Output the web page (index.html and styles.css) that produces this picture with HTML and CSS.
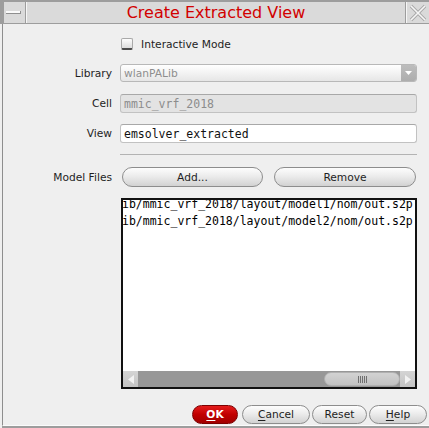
FILE: index.html
```html
<!DOCTYPE html>
<html>
<head>
<meta charset="utf-8">
<link rel="stylesheet" href="styles.css">
</head>
<body>
<div class="window">
  <div class="titlebar">
    <div class="tb-btn tb-min"><span class="dash"></span></div>
    <div class="title">Create Extracted View</div>
    <div class="tb-btn tb-close">
      <svg width="18" height="18" viewBox="0 0 18 18">
        <path d="M2 2 L16 16 M16 2 L2 16" stroke="#a8a8a8" stroke-width="3.4" fill="none"/>
        <path d="M2 2 L16 16 M16 2 L2 16" stroke="#f6f6f6" stroke-width="1.6" fill="none"/>
      </svg>
    </div>
  </div>
  <div class="content">
    <div class="row row-check">
      <div class="label"></div>
      <div class="field check-field"><span class="checkbox"></span><span class="check-text">Interactive Mode</span></div>
    </div>
    <div class="row row-lib">
      <div class="label">Library</div>
      <div class="field combo"><span class="combo-text">wlanPALib</span><span class="combo-arrow"><svg width="7" height="4" viewBox="0 0 7 4"><path d="M0 0 H7 L3.5 4 Z" fill="#fff"/></svg></span></div>
    </div>
    <div class="row row-cell">
      <div class="label">Cell</div>
      <div class="field entry disabled">mmic_vrf_2018</div>
    </div>
    <div class="row row-view">
      <div class="label">View</div>
      <div class="field entry">emsolver_extracted</div>
    </div>
    <div class="row row-sep">
      <div class="label"></div>
      <div class="field sep"></div>
    </div>
    <div class="row row-model">
      <div class="label">Model Files</div>
      <div class="field btn-pair">
        <button class="btn btn-add">Add...</button>
        <button class="btn btn-remove">Remove</button>
      </div>
    </div>
    <div class="row row-list">
      <div class="label"></div>
      <div class="field listbox">
        <div class="list-lines">
          <div>ib/mmic_vrf_2018/layout/model1/nom/out.s2p</div>
          <div>ib/mmic_vrf_2018/layout/model2/nom/out.s2p</div>
        </div>
        <div class="hscroll">
          <span class="sb-arrow"><svg width="8" height="9" viewBox="0 0 8 9"><path d="M7 0 V9 L1 4.5 Z" fill="#f2f2f2"/></svg></span>
          <span class="sb-track"><span class="sb-thumb"><span class="grip"></span></span></span>
          <span class="sb-arrow"><svg width="8" height="9" viewBox="0 0 8 9"><path d="M1 0 V9 L7 4.5 Z" fill="#f2f2f2"/></svg></span>
        </div>
      </div>
    </div>
    <div class="actions">
      <button class="btn btn-ok"><u>O</u>K</button>
      <button class="btn btn-cancel"><u>C</u>ancel</button>
      <button class="btn btn-reset">Reset</button>
      <button class="btn btn-help"><u>H</u>elp</button>
    </div>
  </div>
</div>
</body>
</html>
```

FILE: styles.css
```css
html, body {
  margin: 0;
  padding: 0;
  background: #efefef;
}
body {
  font-family: "DejaVu Sans", sans-serif;
  font-size: 10.67px;
  color: #1e1e1e;
}
.window {
  width: 429px;
  height: 428px;
  display: flex;
  flex-direction: column;
  background: #efefef;
  overflow: hidden;
}
.titlebar {
  height: 24px;
  box-sizing: border-box;
  padding: 2px 0 1px 4px;
  background: #9d9d9d;
  display: flex;
  gap: 1px;
}
.tb-btn {
  background: #dadada;
  display: flex;
  align-items: center;
  justify-content: center;
}
.tb-min {
  width: 21px;
}
.dash {
  width: 14px;
  height: 2px;
  background: #fafafa;
  border-right: 1px solid #8f8f8f;
  border-bottom: 1px solid #8f8f8f;
  margin-right: 2px;
}
.title {
  width: 378px;
  border-left: 1px solid #f6f6f6;
  background: #dadada;
  color: #d20000;
  font-size: 16px;
  line-height: 21px;
  text-align: center;
}
.tb-close {
  flex: 1;
  border-left: 1px solid #f6f6f6;
  justify-content: flex-start;
  padding-left: 2px;
}
.content {
  flex: 1;
  margin-left: 2px;
  border-left: 1px solid #8e8e8e;
  border-bottom: 1px solid #fbfbfb;
  box-shadow: 0 2px 0 #9d9d9d;
  margin-bottom: 2px;
  display: flex;
  flex-direction: column;
}
.row {
  display: flex;
  column-gap: 8px;
}
.label {
  width: 109px;
  flex: none;
  text-align: right;
  display: flex;
  align-items: center;
  justify-content: flex-end;
}
.field {
  width: 297px;
  flex: none;
  box-sizing: border-box;
}
.row-check { margin-top: 14px; height: 12px; }
.check-field {
  display: flex;
  align-items: center;
  padding-left: 1px;
}
.checkbox {
  width: 12px;
  height: 12px;
  box-sizing: border-box;
  border: 1px solid #a9a9a9;
  border-bottom: 2px solid #4a4a4a;
  border-radius: 2px;
  background: linear-gradient(#fdfdfd, #dcdcdc);
}
.check-text {
  margin-left: 8px;
}
.row-lib { margin-top: 14px; height: 18px; }
.combo {
  border: 1px solid #b8b8b8;
  border-radius: 3px;
  background: linear-gradient(#ffffff, #e6e6e6);
  display: flex;
  align-items: center;
  overflow: hidden;
}
.combo-text {
  flex: 1;
  padding-left: 3px;
  color: #8e8e8e;
}
.combo-arrow {
  width: 15px;
  align-self: stretch;
  background: linear-gradient(#bdbdbd, #adadad);
  display: flex;
  align-items: center;
  justify-content: center;
}
.row-cell { margin-top: 12px; height: 19px; }
.row-view { margin-top: 11px; height: 19px; }
.entry {
  border: 1px solid #c2c2c2;
  border-top-color: #a8a8a8;
  border-radius: 3px;
  background: #ffffff;
  font-family: "DejaVu Sans Mono", monospace;
  font-size: 11.5px;
  line-height: 18px;
  padding-left: 3px;
  color: #111;
}
.entry.disabled {
  background: #e3e3e3;
  color: #8c8c8c;
}
.row-sep { margin-top: 11px; height: 1px; }
.sep {
  background: #b3b3b3;
}
.row-model { margin-top: 12px; height: 20px; }
.btn-pair {
  display: flex;
  gap: 11px;
  padding-left: 2px;
}
.btn {
  font-family: "DejaVu Sans", sans-serif;
  font-size: 10.67px;
  color: #1e1e1e;
  border: 1px solid #8d8d8d;
  border-radius: 10px;
  background: linear-gradient(#fdfdfd 0%, #ececec 45%, #d2d2d2 100%);
  padding: 0;
  margin: 0;
  box-sizing: border-box;
}
.btn u {
  text-decoration-thickness: 1px;
  text-underline-offset: 2px;
}
.btn-add { width: 141px; }
.btn-remove { width: 142px; }
.row-list { margin-top: 11px; height: 191px; }
.listbox {
  margin-left: 1px;
  width: 296px;
  border: 2px solid #111;
  background: #ffffff;
  display: flex;
  flex-direction: column;
  overflow: hidden;
}
.list-lines {
  flex: 1;
  margin-top: -4px;
  margin-left: -1px;
  font-family: "DejaVu Sans Mono", monospace;
  font-size: 11.5px;
  line-height: 17px;
  color: #000;
  white-space: nowrap;
  overflow: hidden;
}
.hscroll {
  height: 16px;
  display: flex;
  background: #979797;
}
.sb-arrow {
  width: 15px;
  background: linear-gradient(#d4d4d4, #c4c4c4);
  display: flex;
  align-items: center;
  justify-content: center;
}
.sb-track {
  flex: 1;
  display: flex;
  justify-content: flex-end;
  align-items: stretch;
  padding: 1px 0;
}
.sb-thumb {
  width: 76px;
  box-sizing: border-box;
  border: 1px solid #b0b0b0;
  border-radius: 8px;
  background: linear-gradient(#d2d2d2, #c2c2c2);
  display: flex;
  align-items: center;
  justify-content: center;
}
.grip {
  width: 9px;
  height: 7px;
  background: repeating-linear-gradient(90deg, #6f6f6f 0 1px, transparent 1px 2px);
}
.actions {
  margin-top: 16px;
  height: 19px;
  display: flex;
  justify-content: flex-end;
  gap: 2px;
  padding-right: 2px;
}
.btn-ok {
  width: 46px;
  background: linear-gradient(#e41b1b, #c10000 50%, #a10000);
  border-color: #7c0000;
  color: #fff;
  font-weight: bold;
  margin-right: 2px;
}
.btn-cancel { width: 68px; }
.btn-reset { width: 55px; }
.btn-help { width: 58px; }
```
